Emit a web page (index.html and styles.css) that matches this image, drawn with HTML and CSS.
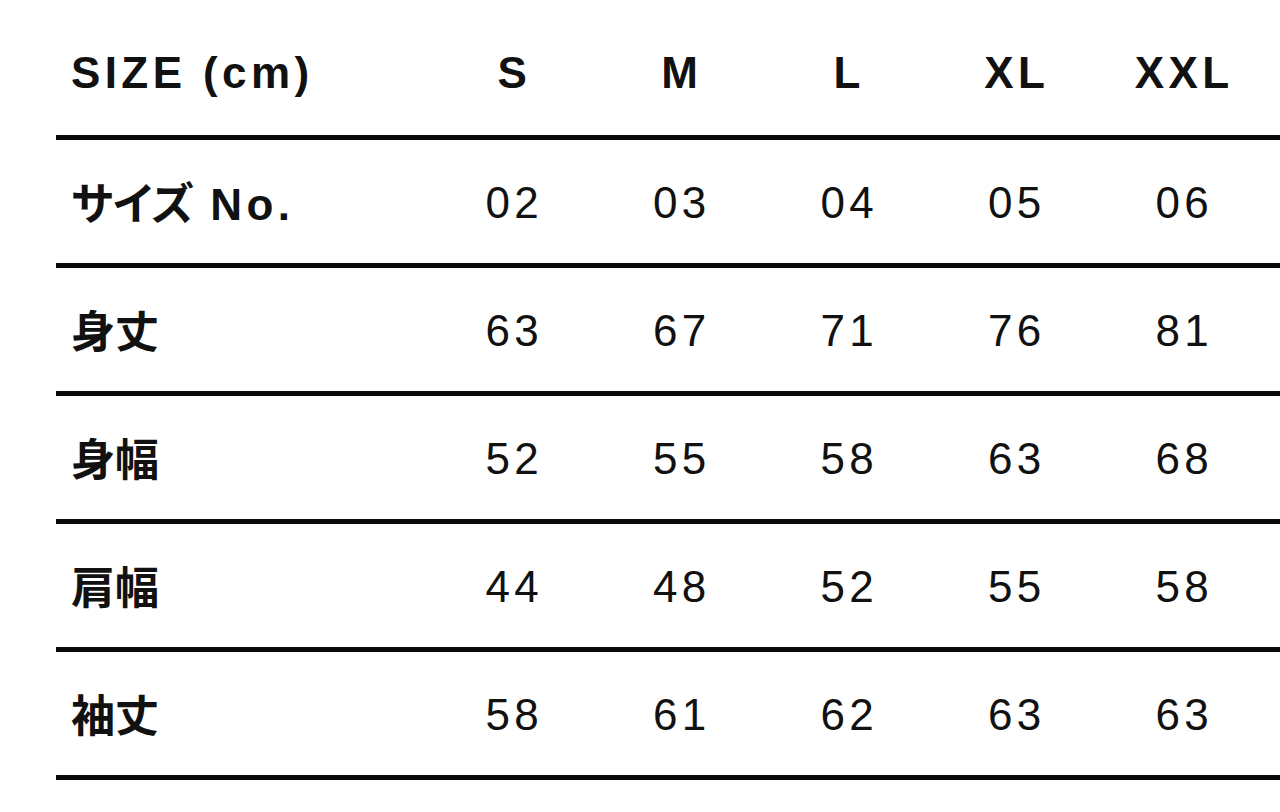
FILE: index.html
```html
<!DOCTYPE html>
<html lang="ja">
<head>
<meta charset="utf-8">
<title>サイズ表</title>
<link rel="stylesheet" href="styles.css">
</head>
<body>
<div class="size-table" role="table">
  <div class="row head" role="row">
    <div class="cell label" role="columnheader">SIZE (cm)</div>
    <div class="cell" role="columnheader">S</div>
    <div class="cell" role="columnheader">M</div>
    <div class="cell" role="columnheader">L</div>
    <div class="cell" role="columnheader">XL</div>
    <div class="cell" role="columnheader">XXL</div>
  </div>
  <div class="row" role="row">
    <div class="cell label" role="rowheader"><span class="ja">サイズ</span> No.</div>
    <div class="cell" role="cell">02</div>
    <div class="cell" role="cell">03</div>
    <div class="cell" role="cell">04</div>
    <div class="cell" role="cell">05</div>
    <div class="cell" role="cell">06</div>
  </div>
  <div class="row" role="row">
    <div class="cell label" role="rowheader"><span class="ja">身丈</span></div>
    <div class="cell" role="cell">63</div>
    <div class="cell" role="cell">67</div>
    <div class="cell" role="cell">71</div>
    <div class="cell" role="cell">76</div>
    <div class="cell" role="cell">81</div>
  </div>
  <div class="row" role="row">
    <div class="cell label" role="rowheader"><span class="ja">身幅</span></div>
    <div class="cell" role="cell">52</div>
    <div class="cell" role="cell">55</div>
    <div class="cell" role="cell">58</div>
    <div class="cell" role="cell">63</div>
    <div class="cell" role="cell">68</div>
  </div>
  <div class="row" role="row">
    <div class="cell label" role="rowheader"><span class="ja">肩幅</span></div>
    <div class="cell" role="cell">44</div>
    <div class="cell" role="cell">48</div>
    <div class="cell" role="cell">52</div>
    <div class="cell" role="cell">55</div>
    <div class="cell" role="cell">58</div>
  </div>
  <div class="row" role="row">
    <div class="cell label" role="rowheader"><span class="ja">袖丈</span></div>
    <div class="cell" role="cell">58</div>
    <div class="cell" role="cell">61</div>
    <div class="cell" role="cell">62</div>
    <div class="cell" role="cell">63</div>
    <div class="cell" role="cell">63</div>
  </div>
</div>
</body>
</html>
```

FILE: styles.css
```css
html, body {
  margin: 0;
  padding: 0;
  background: #ffffff;
}

body {
  font-family: "Liberation Sans", "Noto Sans CJK JP", Arial, sans-serif;
  color: #111111;
}

.size-table {
  margin-left: 56px;
  width: 1224px;
}

.row {
  display: grid;
  grid-template-columns: 374.5px repeat(5, 167.5px) 1fr;
  align-items: center;
  height: 120px;
  padding-top: 3px;
  border-bottom: 5px solid #0a0a0a;
}

.row.head {
  height: 124px;
  padding-top: 11px;
}

.cell {
  font-size: 44px;
  line-height: 1;
  letter-spacing: 0.1em;
  text-align: center;
  font-weight: 400;
  white-space: nowrap;
}

.head .cell {
  font-weight: 700;
}

.cell.label {
  text-align: left;
  padding-left: 15px;
  font-weight: 700;
}

.ja {
  font-family: "Noto Sans CJK JP", sans-serif;
  letter-spacing: 0;
  font-feature-settings: "palt";
}
```
